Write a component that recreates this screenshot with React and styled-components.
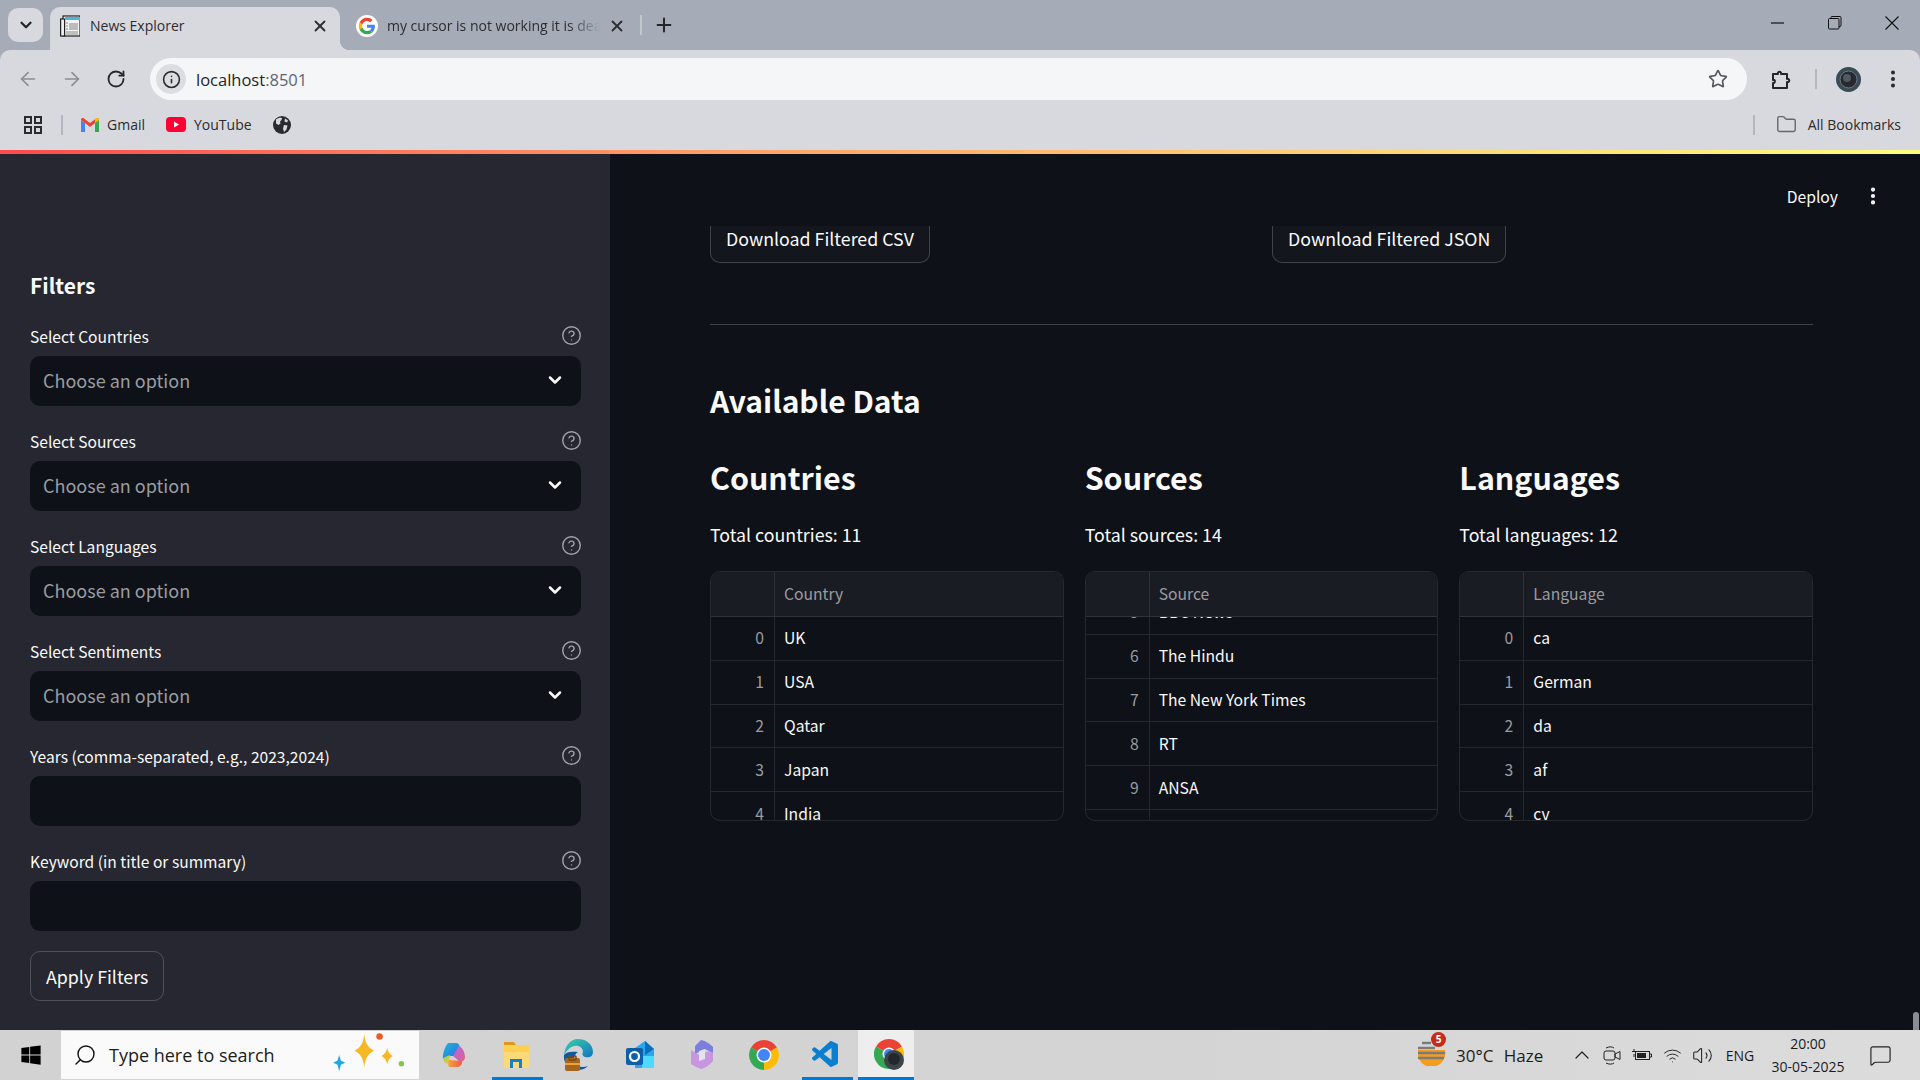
import React from "react";
import styled, { createGlobalStyle } from "styled-components";
import {
  ArrowLeft, ArrowRight, RotateCw, Info, Star, EllipsisVertical, Folder, X, Plus,
  ChevronDown, ChevronUp, Search, Wifi, Volume2, MessageSquare, CircleHelp,
} from "lucide-react";
import { FaWindows } from "react-icons/fa";
import { VscVscode } from "react-icons/vsc";

const GlobalStyle = createGlobalStyle`
  html, body { margin: 0; padding: 0; overflow: hidden; }
  * { box-sizing: border-box; }
  #root { width: 1920px; height: 1080px; }
`;

const UI_FONT = `"Open Sans", "Noto Sans", sans-serif`;
const APP_FONT = `"Noto Sans CJK SC", "Noto Sans", sans-serif`;

const Screen = styled.div`
  width: 1920px;
  height: 1080px;
  display: flex;
  flex-direction: column;
  position: relative;
  overflow: hidden;
  background: #a6abb8;
`;

/* browser chrome */
const TabStrip = styled.div`
  height: 50px;
  display: flex;
  align-items: flex-end;
  padding-left: 8px;
  font-family: ${UI_FONT};
  color: #2c2d31;
`;
const TabListBtn = styled.div`
  width: 35px;
  height: 34px;
  margin: 0 7px 8px 0;
  border-radius: 10px;
  background: #d8d9de;
  display: flex;
  align-items: center;
  justify-content: center;
`;
const Tab = styled.div`
  width: ${(p) => p.$w}px;
  height: 43px;
  padding: 0 12px 6px ${(p) => p.$pl}px;
  display: flex;
  align-items: center;
  position: relative;
  border-radius: 10px 10px 0 0;
  background: ${(p) => (p.$active ? "#d8d9de" : "transparent")};
  ${(p) =>
    p.$active &&
    `&::after {
      content: "";
      position: absolute;
      right: -10px;
      bottom: 0;
      width: 10px;
      height: 10px;
      background: radial-gradient(circle at 100% 0, transparent 10px, #d8d9de 10.5px);
    }`}
`;
const TabTitle = styled.span`
  flex: 1;
  font-size: 14px;
  margin-left: ${(p) => p.$gap}px;
  white-space: nowrap;
  overflow: hidden;
  mask-image: ${(p) => (p.$fade ? "linear-gradient(to right, #000 85%, transparent 100%)" : "none")};
`;
const TabClose = styled.span`
  display: flex;
  width: 18px;
  margin-right: ${(p) => p.$mr || 0}px;
  margin-left: 8px;
`;
const TabSep = styled.div`
  width: 2px;
  height: 20px;
  margin: 0 0 15px 0;
  background: #c4c6ce;
`;
const NewTab = styled.div`
  width: 44px;
  margin-bottom: 14px;
  display: flex;
  justify-content: center;
`;
const WinControls = styled.div`
  margin-left: auto;
  height: 50px;
  display: flex;
  align-items: center;
  padding: 0 0 4px 0;
`;
const WinBtn = styled.div`
  width: 57px;
  display: flex;
  justify-content: center;
`;

const Toolbar = styled.div`
  height: 50px;
  padding: 8px 0 0 6px;
  display: flex;
  align-items: center;
  background: #d8d9de;
  border-radius: 10px 10px 0 0;
  font-family: ${UI_FONT};
`;
const NavBtn = styled.div`
  width: 44px;
  display: flex;
  justify-content: center;
`;
const UrlBar = styled.div`
  width: 1597px;
  height: 42px;
  margin-left: 12px;
  padding: 0 19px 0 6px;
  border-radius: 21px;
  display: flex;
  align-items: center;
  background: #f5f6f8;
`;
const InfoChip = styled.div`
  width: 30px;
  height: 30px;
  border-radius: 50%;
  background: #dcdde1;
  display: flex;
  align-items: center;
  justify-content: center;
`;
const UrlText = styled.span`
  margin-left: 10px;
  flex: 1;
  font-size: 16.5px;
  color: #22252a;
  span { color: #5f6570; }
`;
const ToolbarEnd = styled.div`
  flex: 1;
  display: flex;
  align-items: center;
`;
const ToolSlot = styled.div`
  width: ${(p) => p.$w}px;
  display: flex;
  justify-content: center;
`;
const VSep = styled.div`
  width: 2px;
  height: 20px;
  background: #b4b7c2;
`;

const Bookmarks = styled.div`
  height: 50px;
  padding-bottom: 1px;
  display: flex;
  align-items: center;
  padding-left: 24px;
  background: #d8d9de;
  font-family: ${UI_FONT};
  font-size: 14px;
  color: #2a2b30;
`;
const Bookmark = styled.div`
  display: flex;
  align-items: center;
  gap: 8px;
  margin-left: ${(p) => p.$ml}px;
`;
const AllBookmarks = styled.div`
  margin-left: auto;
  padding-right: 19px;
  display: flex;
  align-items: center;
`;
const BookmarkLabel = styled.span`
  margin-left: 11px;
`;

const Decoration = styled.div`
  height: 4px;
  background: linear-gradient(90deg, #ff4b4b, #ffa56b 40%, #fffd80);
`;

/* streamlit page */
const Page = styled.div`
  height: 876px;
  display: flex;
  font-family: ${APP_FONT};
  color: #fafafa;
`;
const Sidebar = styled.aside`
  width: 610px;
  padding: 114px 29px 0 30px;
  background: #262730;
`;
const SideTitle = styled.h2`
  margin: 0 0 24px;
  font-size: 21px;
  line-height: 34px;
  font-weight: 600;
`;
const Field = styled.div`
  margin-bottom: 25px;
`;
const LabelRow = styled.div`
  height: 20px;
  margin-bottom: 10px;
  padding-bottom: 1px;
  display: flex;
  align-items: center;
  justify-content: space-between;
  font-size: 15.6px;
  line-height: 18px;
  color: #fafafa;
  svg { color: #a3a3a8; margin-right: -1px; }
`;
const InputBox = styled.div`
  height: 50px;
  padding: 0 16px 2px 13px;
  display: flex;
  align-items: center;
  justify-content: space-between;
  background: #0e1117;
  border-radius: 10px;
  font-size: 18px;
  color: #9a9ca0;
`;
const Button = styled.div`
  height: 50px;
  padding: 0 15px 1px;
  display: inline-flex;
  align-items: center;
  border: 1px solid rgba(250, 250, 250, 0.2);
  border-radius: 10px;
  background: ${(p) => p.$bg || "transparent"};
  font-size: 17.8px;
  color: #fafafa;
`;
const ApplyWrap = styled.div`
  margin-top: -5px;
`;

const Main = styled.main`
  flex: 1;
  display: flex;
  flex-direction: column;
  background: #0e1117;
`;
const MainHeader = styled.div`
  height: 72px;
  flex: none;
  padding: 12px 36px 0 0;
  display: flex;
  align-items: center;
  justify-content: flex-end;
  font-size: 15.7px;
`;
const DeployText = styled.span`
  margin-right: 24px;
`;
const Scroller = styled.div`
  flex: 1;
  overflow: hidden;
  padding: 0 107px 0 100px;
`;
const DownloadRow = styled.div`
  margin-top: -13px;
  display: grid;
  grid-template-columns: 1fr 1fr;
  gap: 21px;
`;
const Divider = styled.hr`
  margin: 61px 0 0;
  border: 0;
  border-top: 1px solid rgba(250, 250, 250, 0.2);
`;
const SectionTitle = styled.h2`
  margin: 53px 0 0;
  font-size: 30px;
  line-height: 44px;
  font-weight: 600;
`;
const Columns = styled.div`
  margin-top: 33px;
  display: grid;
  grid-template-columns: repeat(3, 1fr);
  gap: 21px;
`;
const ColTitle = styled.h3`
  margin: 0;
  font-size: 30.4px;
  line-height: 44px;
  font-weight: 600;
`;
const Total = styled.p`
  margin: 21px 0 23px;
  font-size: 17.8px;
  line-height: 28px;
`;
const Table = styled.div`
  height: 250px;
  border: 1px solid rgba(250, 250, 250, 0.1);
  border-radius: 10px;
  overflow: hidden;
  font-size: 15.7px;
  display: flex;
  flex-direction: column;
`;
const HeadRow = styled.div`
  height: 45px;
  flex: none;
  display: flex;
  background: #1a1c24;
  border-bottom: 1px solid rgba(250, 250, 250, 0.1);
  color: #9a9ca0;
  position: relative;
  z-index: 1;
`;
const Body = styled.div`
  margin-top: ${(p) => p.$offset || 0}px;
`;
const Row = styled.div`
  height: 43.8px;
  display: flex;
  border-bottom: 1px solid rgba(250, 250, 250, 0.1);
`;
const IndexCell = styled.div`
  width: 64px;
  padding: 0 10px 1px 0;
  display: flex;
  align-items: center;
  justify-content: flex-end;
  border-right: 1px solid rgba(250, 250, 250, 0.1);
  color: #9a9ca0;
`;
const Cell = styled.div`
  flex: 1;
  padding: 0 0 1px 9px;
  display: flex;
  align-items: center;
`;

const ScrollThumb = styled.div`
  position: absolute;
  right: 1px;
  top: 1012px;
  width: 6px;
  height: 18px;
  border-radius: 3px 3px 0 0;
  background: #8a8d93;
`;

/* windows taskbar */
const Taskbar = styled.div`
  height: 50px;
  display: flex;
  align-items: center;
  background: linear-gradient(90deg, #d2d2d2, #d4d4d4 60%, #dcdcdc);
  font-family: ${UI_FONT};
  color: #1c1c1c;
`;
const StartBtn = styled.div`
  width: 61px;
  display: flex;
  justify-content: center;
`;
const SearchBox = styled.div`
  width: 358px;
  height: 48px;
  margin-right: 4px;
  padding: 0 2px 0 12px;
  display: flex;
  align-items: center;
  background: #fafafa;
  font-size: 18px;
  svg.mirror { transform: scaleX(-1); }
`;
const SearchText = styled.span`
  margin-left: 12px;
  flex: 1;
  white-space: nowrap;
`;
const AppSlot = styled.div`
  width: 62px;
  height: 50px;
  padding-left: ${(p) => (p.$active ? 3 : 0)}px;
  display: flex;
  align-items: center;
  justify-content: center;
  position: relative;
  ${(p) =>
    p.$active &&
    `&::before {
      content: "";
      position: absolute;
      left: 1px;
      width: 56px;
      top: 0;
      bottom: 0;
      background: #eeeeee;
    }`}
  ${(p) =>
    p.$running &&
    `&::after {
      content: "";
      position: absolute;
      left: ${p.$active ? 1 : 7}px;
      width: ${p.$active ? 56 : 51}px;
      bottom: 0;
      height: 3px;
      background: #0078d4;
    }`}
  svg { position: relative; }
`;
const Tray = styled.div`
  margin-left: auto;
  padding-right: 13px;
  display: flex;
  align-items: center;
`;
const WeatherIcon = styled.div`
  width: 40px;
  position: relative;
`;
const WeatherBadge = styled.span`
  position: absolute;
  left: 15px;
  top: -8px;
  width: 15px;
  height: 15px;
  border-radius: 50%;
  background: #c42b1c;
  color: #fff;
  font-size: 10px;
  font-weight: 700;
  line-height: 15px;
  text-align: center;
`;
const WeatherText = styled.div`
  width: 100px;
  margin-right: 11px;
  font-size: 17px;
  white-space: pre;
  word-spacing: -1px;
`;
const TraySlot = styled.div`
  width: ${(p) => p.$w || 30}px;
  display: flex;
  justify-content: center;
  font-size: ${(p) => p.$fs || 14}px;
`;
const Clock = styled.div`
  width: 90px;
  font-size: 14px;
  line-height: 23px;
  text-align: center;
`;

/* drawn icons */
const GoogleG = ({ size = 22 }) => (
  <svg width={size} height={size} viewBox="-8 -8 64 64" style={{ flex: "none" }}>
    <circle cx="24" cy="24" r="32" fill="#fff" />
    <path fill="#EA4335" d="M24 9.5c3.54 0 6.71 1.22 9.21 3.6l6.85-6.85C35.9 2.38 30.47 0 24 0 14.62 0 6.51 5.38 2.56 13.22l7.98 6.19C12.43 13.72 17.74 9.5 24 9.5z" />
    <path fill="#4285F4" d="M46.98 24.55c0-1.57-.15-3.09-.38-4.55H24v9.02h12.94c-.58 2.96-2.26 5.48-4.78 7.18l7.73 6c4.51-4.18 7.09-10.36 7.09-17.65z" />
    <path fill="#FBBC05" d="M10.53 28.59c-.48-1.45-.76-2.99-.76-4.59s.27-3.14.76-4.59l-7.98-6.19C.92 16.46 0 20.12 0 24c0 3.88.92 7.54 2.56 10.78l7.97-6.19z" />
    <path fill="#34A853" d="M24 48c6.48 0 11.93-2.13 15.89-5.81l-7.73-6c-2.15 1.45-4.92 2.3-8.16 2.3-6.26 0-11.57-4.22-13.47-9.91l-7.98 6.19C6.51 42.62 14.62 48 24 48z" />
  </svg>
);
const NewsFavicon = () => (
  <svg width="20" height="22" viewBox="0 0 20 22" style={{ flex: "none" }}>
    <rect x="3" y="1" width="17" height="20" fill="#f4f4f4" stroke="#222" strokeWidth="1.2" />
    <rect x="0.6" y="4" width="4" height="17" fill="#eee" stroke="#222" strokeWidth="1.2" />
    <rect x="5" y="2" width="15" height="3" fill="#45b8e6" />
    <rect x="9" y="8" width="9" height="7" fill="#bbb" />
    <path d="M6 8h2M6 11h2M6 14h2M6 17h12M6 19h12" stroke="#888" strokeWidth="1" />
  </svg>
);
const MinimizeIcon = () => (
  <svg width="14" height="14" viewBox="0 0 14 14"><path d="M0 7h13" stroke="#111" strokeWidth="1.2" /></svg>
);
const RestoreIcon = () => (
  <svg width="14" height="14" viewBox="0 0 14 14" fill="none" stroke="#111" strokeWidth="1">
    <rect x="0.5" y="2.5" width="10.5" height="10.5" rx="1" />
    <path d="M3 2.5V1.5a1 1 0 0 1 1-1h8a1 1 0 0 1 1 1v8a1 1 0 0 1-1 1h-1" />
  </svg>
);
const CloseIcon = () => (
  <svg width="14" height="14" viewBox="0 0 14 14" stroke="#111" strokeWidth="1.1">
    <path d="M0.5 0.5l13 13M13.5 0.5l-13 13" />
  </svg>
);
const GmailIcon = () => (
  <svg width="18" height="14" viewBox="0 0 18 14">
    <path fill="#4285F4" d="M0 2v12h4V5z" />
    <path fill="#34A853" d="M14 5v9h4V2z" />
    <path fill="#EA4335" d="M0 2c0-2 2-2.500 3-1.500L9 5l6-4.500C16-.5 18 0 18 2l-4 3-5 4-5-4z" />
    <path fill="#FBBC05" d="M14 5V1.500l1-1C16-.5 18 0 18 2z" />
  </svg>
);
const YoutubeIcon = () => (
  <svg width="20" height="15" viewBox="0 0 20 15">
    <rect width="20" height="15" rx="4" fill="#ff0033" />
    <path d="M8 4.500v6l5-3z" fill="#fff" />
  </svg>
);
const GlobeIcon = () => (
  <svg width="18" height="18" viewBox="0 0 18 18">
    <circle cx="9" cy="9" r="9" fill="#2a2b30" />
    <path fill="#d8d9de" d="M3 3.500c2-1.500 4-2 6-1.500l-.5 2L7 5.500l.5 2L5.500 9 3 7.500zM11 9l3.500.5-1 4-2.500 2.500-1-3.500zM12 2.500l3 2-1 2-2.500-1z" />
  </svg>
);
const AppsIcon = () => (
  <svg width="18" height="18" viewBox="0 0 18 18" fill="none" stroke="#2a2b30" strokeWidth="2">
    <rect x="1" y="1" width="6" height="6" />
    <rect x="11" y="1" width="6" height="6" />
    <rect x="1" y="11" width="6" height="6" />
    <rect x="11" y="11" width="6" height="6" />
  </svg>
);
const PuzzleIcon = () => (
  <svg width="21" height="21" viewBox="0 0 21 21" fill="none" stroke="#24262b" strokeWidth="2" strokeLinejoin="round">
    <path d="M2 5h5c-1-3 4-3 3 0h6v5c3-1 3 4 0 3v6H2v-5c2 1 3-4 0-3 2 0 1 0 0 0z" />
  </svg>
);
const Avatar = () => (
  <svg width="25" height="25" viewBox="0 0 25 25">
    <circle cx="12.5" cy="12.5" r="12.5" fill="#3b4a55" />
    <circle cx="12.5" cy="12.5" r="8.5" fill="#27292e" stroke="#6c7a85" strokeWidth="1" />
    <circle cx="11" cy="11" r="4" fill="#4f5a63" />
  </svg>
);
const ChromeLogo = ({ size = 30 }) => (
  <svg width={size} height={size} viewBox="4 4 40 40">
    <path fill="#EA4335" d="M24 24L6.700 14A20 20 0 0 1 41.300 14Z" />
    <path fill="#FBBC05" d="M24 24L41.300 14A20 20 0 0 1 24 44Z" />
    <path fill="#34A853" d="M24 24L24 44A20 20 0 0 1 6.700 14Z" />
    <circle cx="24" cy="24" r="10" fill="#fff" />
    <circle cx="24" cy="24" r="8" fill="#4285F4" />
  </svg>
);
const ChromeProfile = () => (
  <svg width="32" height="34" viewBox="0 0 32 34">
    <g transform="translate(0 1)">
      <path fill="#EA4335" d="M15 15L2 7.500A15 15 0 0 1 28 7.500Z" />
      <path fill="#FBBC05" d="M15 15L28 7.500A15 15 0 0 1 15 30Z" />
      <path fill="#34A853" d="M15 15L15 30A15 15 0 0 1 2 7.500Z" />
      <circle cx="15" cy="15" r="6.500" fill="#fff" />
      <circle cx="15" cy="15" r="5" fill="#4285F4" />
    </g>
    <circle cx="20" cy="22" r="10" fill="#3c444c" />
    <circle cx="20" cy="21" r="6" fill="#24282d" />
  </svg>
);
const CopilotIcon = () => (
  <svg width="30" height="30" viewBox="0 0 30 30">
    <defs>
      <linearGradient id="cpa" x1="0" y1="0" x2="1" y2="1">
        <stop offset="0" stopColor="#1fb6d8" />
        <stop offset="1" stopColor="#2d6ee6" />
      </linearGradient>
      <linearGradient id="cpb" x1="0" y1="0" x2="1" y2="1">
        <stop offset="0" stopColor="#b06ae8" />
        <stop offset="1" stopColor="#e85a8a" />
      </linearGradient>
      <linearGradient id="cpc" x1="0" y1="0" x2="1" y2="1">
        <stop offset="0" stopColor="#8fd14f" />
        <stop offset="1" stopColor="#f6c23c" />
      </linearGradient>
      <linearGradient id="cpd" x1="0" y1="0" x2="1" y2="0">
        <stop offset="0" stopColor="#f5a13a" />
        <stop offset="1" stopColor="#ef5a4a" />
      </linearGradient>
    </defs>
    <path fill="url(#cpa)" d="M9 3h8c2 0 3 1 3.500 3L16 16l-5 0-7 3c-1-4 2-13 5-16z" />
    <path fill="url(#cpb)" d="M20 6c3 1 6 6 6 12-1 3-3 4-6 3l-6-5z" />
    <path fill="url(#cpc)" d="M4 18l7-3-1 8c-2 2-5-1-6-5z" />
    <path fill="url(#cpd)" d="M10 20l12 1c2 0 1 5-3 6h-8c-2 0-2-4-1-7z" />
  </svg>
);
const ExplorerIcon = () => (
  <svg width="28" height="30" viewBox="0 0 28 30">
    <path fill="#d99a1f" d="M2 2h10l2 3h-12z" />
    <rect x="2" y="5" width="25" height="23" fill="#ffcf52" />
    <rect x="2" y="12" width="25" height="16" fill="#f9d978" />
    <path fill="#1a7fc7" d="M8 28v-9h12v9h-3v-6h-6v6z" />
  </svg>
);
const EdgeIcon = () => (
  <svg width="32" height="34" viewBox="0 0 32 34">
    <defs>
      <linearGradient id="edg" x1="0" y1="0" x2="1" y2="1">
        <stop offset="0" stopColor="#3fd0a6" />
        <stop offset="1" stopColor="#0d75c4" />
      </linearGradient>
    </defs>
    <path fill="url(#edg)" d="M16 1c9 0 15 6 15 13 0 5-5 6-8 5-3-1-3-4-2-5 0-4-4-7-9-6-4 1-8 5-10 9C3 8 8 1 16 1z" />
    <path fill="#0b5aa3" d="M2 17c-1 8 5 15 13 15 4 0 8-1 11-4-5 2-11 1-13-3-2-5 0-9 3-11-7-1-12 0-14 3z" />
    <rect x="3" y="20" width="15" height="13" rx="2" fill="#a5651d" />
    <rect x="7" y="18" width="7" height="4" rx="1" fill="none" stroke="#7a4a12" strokeWidth="1.5" />
    <rect x="3" y="25" width="15" height="2" fill="#e8a43a" />
  </svg>
);
const OutlookIcon = () => (
  <svg width="30" height="30" viewBox="0 0 30 30">
    <path fill="#28a8ea" d="M10 8l10-7 9 8v19H10z" />
    <path fill="#0f6cbd" d="M20 1l9 8-9 6z" />
    <path fill="#50d9ff" d="M17 16h12v12H17z" />
    <rect x="1" y="8" width="17" height="17" rx="2" fill="#0f5ea8" />
    <circle cx="9.5" cy="16.5" r="4.5" fill="none" stroke="#fff" strokeWidth="2.2" />
  </svg>
);
const M365Icon = () => (
  <svg width="26" height="32" viewBox="0 0 26 32">
    <path fill="#7b7fe0" d="M12 1c5 1 9 4 12 7v6l-8-4-10 5V7z" />
    <path fill="#c58fe0" d="M2 11l8 5 10-4 4 2v8c-3 4-8 7-12 8-3-1-7-3-10-5z" opacity="0.9" />
    <path fill="#e3e3ee" d="M10 12l6-2v10l-6 2z" />
  </svg>
);
const SearchSparkles = () => (
  <svg width="88" height="48" viewBox="0 0 80 44">
    <path fill="#f7b825" d="M32 3c1 8 3 12 9 15-6 3-8 7-9 15-1-8-3-12-9-15 6-3 8-7 9-15z" />
    <path fill="#f7b825" d="M53 15c.6 4 2 6 5 8-3 2-4.400 4-5 8-.6-4-2-6-5-8 3-2 4.400-4 5-8z" />
    <circle cx="46" cy="5" r="3" fill="#e85d26" />
    <circle cx="66" cy="30" r="2.5" fill="#8bc34a" />
    <path fill="#1ea7e8" d="M9 22l1.500 5 4 2-4 2L9 37l-1.500-6-4-2 4-2z" />
  </svg>
);
const WeatherDrawing = () => (
  <svg width="30" height="26" viewBox="0 0 30 26">
    <path fill="#f39c1f" d="M2 10h27a13.500 13.500 0 0 1-27 6z" />
    <path d="M6 3h9M2 8h17M2 13h27M2 18h26" stroke="#7b7b7b" strokeWidth="2.5" />
  </svg>
);
const CameraTray = () => (
  <svg width="20" height="20" viewBox="0 0 20 20" fill="none" stroke="#222" strokeWidth="1">
    <rect x="2" y="6" width="11" height="9" rx="2" />
    <path d="M13 9l5-2.500v8L13 12z" />
    <path d="M4 3c3-1.500 6-1.500 8 0M4 18c3 1.500 6 1.500 8 0" />
  </svg>
);
const BatteryTray = () => (
  <svg width="20" height="14" viewBox="0 0 20 14" fill="none" stroke="#222">
    <rect x="3.5" y="3.5" width="14" height="8" />
    <rect x="5" y="5" width="9" height="5" fill="#222" stroke="none" />
    <path d="M18 6h1.500v3H18M2 1v2M0 3.500h4M2 6v3" />
  </svg>
);

const Help = () => <CircleHelp size={21} strokeWidth={1.6} />;

const filters = [
  { label: "Select Countries", select: true },
  { label: "Select Sources", select: true },
  { label: "Select Languages", select: true },
  { label: "Select Sentiments", select: true },
  { label: "Years (comma-separated, e.g., 2023,2024)" },
  { label: "Keyword (in title or summary)" },
];

const tables = [
  {
    title: "Countries",
    total: "Total countries: 11",
    head: "Country",
    rows: [[0, "UK"], [1, "USA"], [2, "Qatar"], [3, "Japan"], [4, "India"]],
  },
  {
    title: "Sources",
    total: "Total sources: 14",
    head: "Source",
    offset: -26,
    rows: [[5, "BBC News"], [6, "The Hindu"], [7, "The New York Times"], [8, "RT"], [9, "ANSA"], ["", ""]],
  },
  {
    title: "Languages",
    total: "Total languages: 12",
    head: "Language",
    rows: [[0, "ca"], [1, "German"], [2, "da"], [3, "af"], [4, "cv"]],
  },
];

const dock = [
  { icon: <CopilotIcon /> },
  { icon: <ExplorerIcon />, running: true },
  { icon: <EdgeIcon /> },
  { icon: <OutlookIcon /> },
  { icon: <M365Icon /> },
  { icon: <ChromeLogo /> },
  { icon: <VscVscode size={32} color="#0a7fd0" />, running: true },
  { icon: <ChromeProfile />, running: true, active: true },
];

export default function App() {
  return (
    <Screen>
      <GlobalStyle />
      <TabStrip>
        <TabListBtn><ChevronDown size={18} strokeWidth={3} color="#25262b" /></TabListBtn>
        <Tab $active $w={290} $pl={10}>
          <NewsFavicon />
          <TabTitle $gap={10}>News Explorer</TabTitle>
          <TabClose $mr={-1}><X size={18} strokeWidth={2.4} /></TabClose>
        </Tab>
        <Tab $w={300} $pl={16}>
          <GoogleG />
          <TabTitle $gap={9} $fade>my cursor is not working it is dead</TabTitle>
          <TabClose $mr={2}><X size={18} strokeWidth={2.4} /></TabClose>
        </Tab>
        <TabSep />
        <NewTab><Plus size={22} strokeWidth={2.2} color="#25262b" /></NewTab>
        <WinControls>
          <WinBtn><MinimizeIcon /></WinBtn>
          <WinBtn><RestoreIcon /></WinBtn>
          <WinBtn><CloseIcon /></WinBtn>
        </WinControls>
      </TabStrip>

      <Toolbar>
        <NavBtn><ArrowLeft size={22} strokeWidth={1.8} color="#8b8d94" /></NavBtn>
        <NavBtn><ArrowRight size={22} strokeWidth={1.8} color="#8b8d94" /></NavBtn>
        <NavBtn><RotateCw size={20} strokeWidth={2.2} color="#26282d" /></NavBtn>
        <UrlBar>
          <InfoChip><Info size={19} strokeWidth={2} color="#2a2b30" /></InfoChip>
          <UrlText>localhost<span>:8501</span></UrlText>
          <Star size={20} strokeWidth={2} color="#55585f" />
        </UrlBar>
        <ToolbarEnd>
          <ToolSlot $w={68}><PuzzleIcon /></ToolSlot>
          <VSep />
          <ToolSlot $w={62}><Avatar /></ToolSlot>
          <ToolSlot $w={27}><EllipsisVertical size={22} strokeWidth={2.4} color="#26282d" /></ToolSlot>
        </ToolbarEnd>
      </Toolbar>

      <Bookmarks>
        <AppsIcon />
        <VSep style={{ marginLeft: 19 }} />
        <Bookmark $ml={18}><GmailIcon />Gmail</Bookmark>
        <Bookmark $ml={21}><YoutubeIcon />YouTube</Bookmark>
        <Bookmark $ml={21}><GlobeIcon /></Bookmark>
        <AllBookmarks>
          <VSep style={{ marginRight: 21 }} />
          <Folder size={21} strokeWidth={1.6} color="#65676e" />
          <BookmarkLabel>All Bookmarks</BookmarkLabel>
        </AllBookmarks>
      </Bookmarks>
      <Decoration />

      <Page>
        <Sidebar>
          <SideTitle>Filters</SideTitle>
          {filters.map((f) => (
            <Field key={f.label}>
              <LabelRow>{f.label}<Help /></LabelRow>
              <InputBox>
                {f.select && "Choose an option"}
                {f.select && <ChevronDown size={20} strokeWidth={3} color="#fafafa" />}
              </InputBox>
            </Field>
          ))}
          <ApplyWrap><Button>Apply Filters</Button></ApplyWrap>
        </Sidebar>
        <Main>
          <MainHeader>
            <DeployText>Deploy</DeployText>
            <EllipsisVertical size={22} strokeWidth={2.6} color="#fafafa" />
          </MainHeader>
          <Scroller>
            <DownloadRow>
              <div><Button $bg="#13161d">Download Filtered CSV</Button></div>
              <div><Button $bg="#13161d">Download Filtered JSON</Button></div>
            </DownloadRow>
            <Divider />
            <SectionTitle>Available Data</SectionTitle>
            <Columns>
              {tables.map((t) => (
                <div key={t.title}>
                  <ColTitle>{t.title}</ColTitle>
                  <Total>{t.total}</Total>
                  <Table>
                    <HeadRow>
                      <IndexCell />
                      <Cell>{t.head}</Cell>
                    </HeadRow>
                    <Body $offset={t.offset}>
                      {t.rows.map(([i, name]) => (
                        <Row key={`${i}${name}`}>
                          <IndexCell>{i}</IndexCell>
                          <Cell>{name}</Cell>
                        </Row>
                      ))}
                    </Body>
                  </Table>
                </div>
              ))}
            </Columns>
          </Scroller>
        </Main>
      </Page>
      <ScrollThumb />

      <Taskbar>
        <StartBtn><FaWindows size={22} color="#000" /></StartBtn>
        <SearchBox>
          <Search className="mirror" size={24} strokeWidth={1.4} color="#111" />
          <SearchText>Type here to search</SearchText>
          <SearchSparkles />
        </SearchBox>
        {dock.map((d, i) => (
          <AppSlot key={i} $running={d.running} $active={d.active}>{d.icon}</AppSlot>
        ))}
        <Tray>
          <WeatherIcon>
            <WeatherDrawing />
            <WeatherBadge>5</WeatherBadge>
          </WeatherIcon>
          <WeatherText>30°C   Haze</WeatherText>
          <TraySlot><ChevronUp size={24} strokeWidth={1.2} color="#222" /></TraySlot>
          <TraySlot><CameraTray /></TraySlot>
          <TraySlot><BatteryTray /></TraySlot>
          <TraySlot><Wifi size={19} strokeWidth={1.2} color="#222" /></TraySlot>
          <TraySlot><Volume2 size={21} strokeWidth={1.2} color="#222" /></TraySlot>
          <TraySlot $w={46}>ENG</TraySlot>
          <Clock>20:00<br />30-05-2025</Clock>
          <TraySlot $w={54}><MessageSquare size={23} strokeWidth={1.2} color="#222" /></TraySlot>
        </Tray>
      </Taskbar>
    </Screen>
  );
}
